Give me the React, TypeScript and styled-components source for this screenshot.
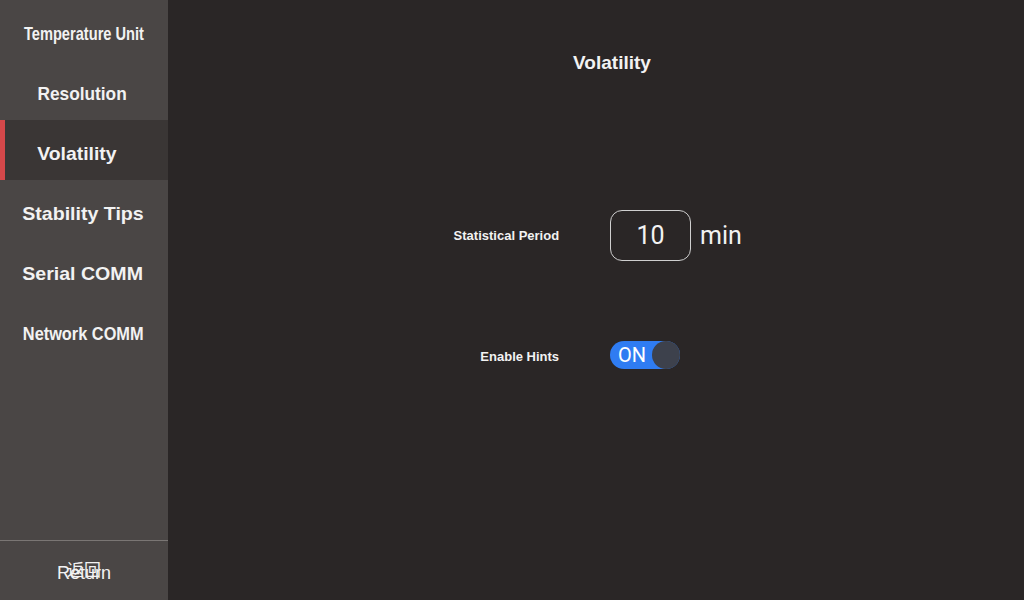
import React, { useState } from "react";
import styled, { createGlobalStyle } from "styled-components";

const GlobalStyle = createGlobalStyle`
  html, body {
    margin: 0;
    padding: 0;
    background: #2a2626;
  }
  * {
    box-sizing: border-box;
  }
`;

const Screen = styled.div`
  width: 1024px;
  height: 600px;
  display: flex;
  font-family: "Liberation Sans", Arial, sans-serif;
  color: #f2f2f2;
  overflow: hidden;
`;

const Sidebar = styled.nav`
  width: 168px;
  height: 100%;
  background: #4a4645;
  display: flex;
  flex-direction: column;
`;

const MenuList = styled.ul`
  list-style: none;
  margin: 0;
  padding: 0;
  flex: 1;
`;

const MenuItem = styled.li<{ $active?: boolean }>`
  height: 60px;
  display: flex;
  align-items: center;
  justify-content: center;
  padding-top: 8px;
  position: relative;
  background: ${(p) => (p.$active ? "#3a3635" : "transparent")};
  font-size: 19px;
  font-weight: bold;
  cursor: pointer;

  &::before {
    content: "";
    position: absolute;
    left: 0;
    top: 0;
    bottom: 0;
    width: 5px;
    background: ${(p) => (p.$active ? "#d4484a" : "transparent")};
  }
`;

const ItemText = styled.span<{ $squeeze: number; $shift: number }>`
  display: inline-block;
  white-space: nowrap;
  transform: translateX(${(p) => p.$shift}px) scaleX(${(p) => p.$squeeze});
`;

const ReturnButton = styled.button`
  height: 60px;
  border: none;
  border-top: 1px solid #7a7674;
  background: transparent;
  color: #f2f2f2;
  font-family: inherit;
  display: grid;
  place-items: center;
  padding: 6px 0 0;
  cursor: pointer;
`;

const Overlap = styled.span`
  grid-area: 1 / 1;
  font-size: 18px;
  white-space: nowrap;
`;

const OverlapCjk = styled(Overlap)`
  font-family: "Noto Sans CJK SC", sans-serif;
  font-size: 17px;
  transform: translateY(-5px);
`;

const Main = styled.main`
  flex: 1;
  display: flex;
  flex-direction: column;
  align-items: center;
  padding-left: 32px;
`;

const Title = styled.h1`
  margin: 52px 0 0;
  font-size: 19px;
  font-weight: bold;
`;

const Form = styled.div`
  margin-top: 136px;
  display: grid;
  grid-template-columns: 160px auto;
  column-gap: 50px;
  row-gap: 80px;
  align-items: center;
  margin-left: -82px;
`;

const Label = styled.span`
  font-size: 13px;
  font-weight: bold;
  text-align: right;
  padding-right: 1px;
`;

const HintLabel = styled(Label)`
  padding-top: 3px;
`;

const FieldRow = styled.div`
  display: flex;
  align-items: center;
  gap: 9px;
`;

const NumberBox = styled.div`
  width: 81px;
  height: 51px;
  border: 1px solid #cfcfcf;
  border-radius: 12px;
  display: flex;
  align-items: center;
  justify-content: center;
  font-family: Roboto, "Liberation Sans", sans-serif;
  font-size: 25px;
`;

const Unit = styled.span`
  font-family: Roboto, "Liberation Sans", sans-serif;
  font-size: 25px;
`;

const Toggle = styled.button<{ $on: boolean }>`
  width: 70px;
  height: 28px;
  border: none;
  border-radius: 14px;
  padding: 0;
  background: ${(p) => (p.$on ? "#2f7cf2" : "#666")};
  display: flex;
  align-items: center;
  justify-content: space-between;
  flex-direction: ${(p) => (p.$on ? "row" : "row-reverse")};
  cursor: pointer;
`;

const ToggleText = styled.span`
  color: #ffffff;
  font-family: Roboto, "Liberation Sans", sans-serif;
  font-size: 20px;
  padding-left: 8px;
`;

const Knob = styled.span`
  width: 28px;
  height: 28px;
  border-radius: 50%;
  background: #3d414c;
`;

const menu = [
  { label: "Temperature Unit", squeeze: 0.77, shift: 0 },
  { label: "Resolution", squeeze: 0.91, shift: -2 },
  { label: "Volatility", squeeze: 1.02, shift: -7 },
  { label: "Stability Tips", squeeze: 1.03, shift: -1 },
  { label: "Serial COMM", squeeze: 1.03, shift: -1 },
  { label: "Network COMM", squeeze: 0.86, shift: -1 },
];

export default function App() {
  const [hints, setHints] = useState(true);
  const active = "Volatility";

  return (
    <>
      <GlobalStyle />
      <Screen>
        <Sidebar>
          <MenuList>
            {menu.map((m) => (
              <MenuItem key={m.label} $active={m.label === active}>
                <ItemText $squeeze={m.squeeze} $shift={m.shift}>
                  {m.label}
                </ItemText>
              </MenuItem>
            ))}
          </MenuList>
          <ReturnButton>
            <OverlapCjk>返回</OverlapCjk>
            <Overlap>Return</Overlap>
          </ReturnButton>
        </Sidebar>
        <Main>
          <Title>Volatility</Title>
          <Form>
            <Label>Statistical Period</Label>
            <FieldRow>
              <NumberBox>10</NumberBox>
              <Unit>min</Unit>
            </FieldRow>
            <HintLabel>Enable Hints</HintLabel>
            <FieldRow>
              <Toggle $on={hints} onClick={() => setHints(!hints)}>
                <ToggleText>{hints ? "ON" : "OFF"}</ToggleText>
                <Knob />
              </Toggle>
            </FieldRow>
          </Form>
        </Main>
      </Screen>
    </>
  );
}
